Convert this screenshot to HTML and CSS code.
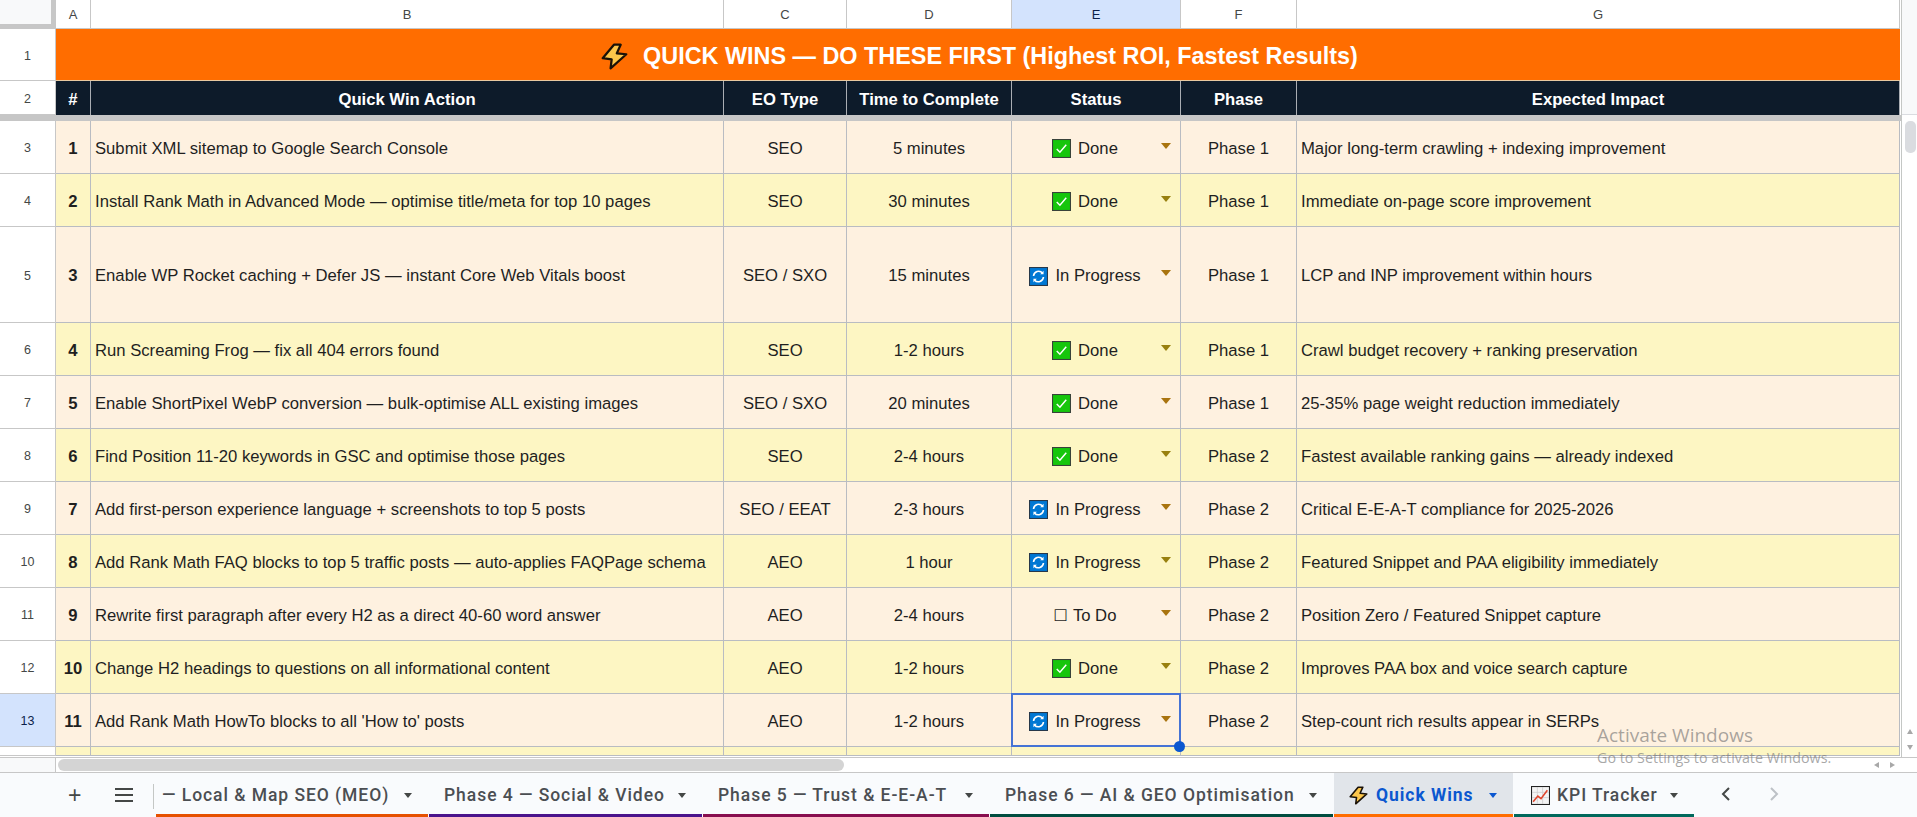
FILE: index.html
```html
<!DOCTYPE html>
<html lang="en">
<head>
  <meta charset="UTF-8">
  <title>Quick Wins</title>
  <link rel="stylesheet" href="styles.css">
</head>
<body>
  <svg class="defs" width="0" height="0">
    <symbol id="bolt" viewBox="0 0 24 24">
      <path d="M11.5 1.5 1.5 13.5l8 1-1 8 14-12.500-8.500-.8L17.500 1.500z" fill="#fcc64a" stroke="#1a1208" stroke-width="2" stroke-linejoin="round"/>
    </symbol>
    <symbol id="check" viewBox="0 0 18 18">
      <rect x=".5" y=".5" width="17" height="17" fill="#16c60c" stroke="#38423a"/>
      <path d="M4.500 9.500 7.500 12.500 13.500 5.500" fill="none" stroke="#fff" stroke-width="1.400"/>
    </symbol>
    <symbol id="sync" viewBox="0 0 18 18">
      <rect x=".5" y=".5" width="17" height="17" fill="#0078d4" stroke="#27384a"/>
      <path d="M4.300 8.500A4.800 4.800 0 0 1 12.800 5.800M13.700 9.500A4.800 4.800 0 0 1 5.200 12.200" fill="none" stroke="#fff" stroke-width="1.500"/>
      <path d="M13.800 3.600v3.200h-3.200zM4.200 14.400v-3.200h3.200z" fill="#fff"/>
    </symbol>
    <symbol id="chart" viewBox="0 0 18 18">
      <rect x=".5" y=".5" width="17" height="17" fill="#f4f4f4" stroke="#222"/>
      <path d="M1 6h16M1 11h16M6 1v16M11 1v16" stroke="#cfcfcf" stroke-width=".8"/>
      <path d="M2 15 6.500 9.500l3 2.500L15.500 4" fill="none" stroke="#e0452c" stroke-width="1.500"/>
    </symbol>
  </svg>

  <div class="app">
    <div class="main">
      <div class="grid">
        <div class="row col-heads">
          <div class="corner"></div>
          <div class="ch">A</div>
          <div class="ch">B</div>
          <div class="ch">C</div>
          <div class="ch">D</div>
          <div class="ch active">E</div>
          <div class="ch">F</div>
          <div class="ch">G</div>
        </div>

        <div class="row title-row">
          <div class="rh">1</div>
          <div class="title">
            <svg class="title-bolt"><use href="#bolt"/></svg>
            <span>QUICK WINS — DO THESE FIRST (Highest ROI, Fastest Results)</span>
          </div>
        </div>

        <div class="row head-row">
          <div class="rh">2</div>
          <div class="th">#</div>
          <div class="th">Quick Win Action</div>
          <div class="th">EO Type</div>
          <div class="th">Time to Complete</div>
          <div class="th">Status</div>
          <div class="th">Phase</div>
          <div class="th">Expected Impact</div>
        </div>

        <div class="freeze"></div>

        <div class="row data peach">
          <div class="rh">3</div>
          <div class="td num">1</div>
          <div class="td">Submit XML sitemap to Google Search Console</div>
          <div class="td mid">SEO</div>
          <div class="td mid">5 minutes</div>
          <div class="td status"><span class="chip"><svg class="ico"><use href="#check"/></svg>Done</span><i class="caret"></i></div>
          <div class="td mid">Phase 1</div>
          <div class="td">Major long-term crawling + indexing improvement</div>
        </div>
        <div class="row data yellow">
          <div class="rh">4</div>
          <div class="td num">2</div>
          <div class="td">Install Rank Math in Advanced Mode — optimise title/meta for top 10 pages</div>
          <div class="td mid">SEO</div>
          <div class="td mid">30 minutes</div>
          <div class="td status"><span class="chip"><svg class="ico"><use href="#check"/></svg>Done</span><i class="caret"></i></div>
          <div class="td mid">Phase 1</div>
          <div class="td">Immediate on-page score improvement</div>
        </div>
        <div class="row data peach tall">
          <div class="rh">5</div>
          <div class="td num">3</div>
          <div class="td">Enable WP Rocket caching + Defer JS — instant Core Web Vitals boost</div>
          <div class="td mid">SEO / SXO</div>
          <div class="td mid">15 minutes</div>
          <div class="td status"><span class="chip"><svg class="ico"><use href="#sync"/></svg>In Progress</span><i class="caret"></i></div>
          <div class="td mid">Phase 1</div>
          <div class="td">LCP and INP improvement within hours</div>
        </div>
        <div class="row data yellow">
          <div class="rh">6</div>
          <div class="td num">4</div>
          <div class="td">Run Screaming Frog — fix all 404 errors found</div>
          <div class="td mid">SEO</div>
          <div class="td mid">1-2 hours</div>
          <div class="td status"><span class="chip"><svg class="ico"><use href="#check"/></svg>Done</span><i class="caret"></i></div>
          <div class="td mid">Phase 1</div>
          <div class="td">Crawl budget recovery + ranking preservation</div>
        </div>
        <div class="row data peach">
          <div class="rh">7</div>
          <div class="td num">5</div>
          <div class="td">Enable ShortPixel WebP conversion — bulk-optimise ALL existing images</div>
          <div class="td mid">SEO / SXO</div>
          <div class="td mid">20 minutes</div>
          <div class="td status"><span class="chip"><svg class="ico"><use href="#check"/></svg>Done</span><i class="caret"></i></div>
          <div class="td mid">Phase 1</div>
          <div class="td">25-35% page weight reduction immediately</div>
        </div>
        <div class="row data yellow">
          <div class="rh">8</div>
          <div class="td num">6</div>
          <div class="td">Find Position 11-20 keywords in GSC and optimise those pages</div>
          <div class="td mid">SEO</div>
          <div class="td mid">2-4 hours</div>
          <div class="td status"><span class="chip"><svg class="ico"><use href="#check"/></svg>Done</span><i class="caret"></i></div>
          <div class="td mid">Phase 2</div>
          <div class="td">Fastest available ranking gains — already indexed</div>
        </div>
        <div class="row data peach">
          <div class="rh">9</div>
          <div class="td num">7</div>
          <div class="td">Add first-person experience language + screenshots to top 5 posts</div>
          <div class="td mid">SEO / EEAT</div>
          <div class="td mid">2-3 hours</div>
          <div class="td status"><span class="chip"><svg class="ico"><use href="#sync"/></svg>In Progress</span><i class="caret"></i></div>
          <div class="td mid">Phase 2</div>
          <div class="td">Critical E-E-A-T compliance for 2025-2026</div>
        </div>
        <div class="row data yellow">
          <div class="rh">10</div>
          <div class="td num">8</div>
          <div class="td">Add Rank Math FAQ blocks to top 5 traffic posts — auto-applies FAQPage schema</div>
          <div class="td mid">AEO</div>
          <div class="td mid">1 hour</div>
          <div class="td status"><span class="chip"><svg class="ico"><use href="#sync"/></svg>In Progress</span><i class="caret"></i></div>
          <div class="td mid">Phase 2</div>
          <div class="td">Featured Snippet and PAA eligibility immediately</div>
        </div>
        <div class="row data peach">
          <div class="rh">11</div>
          <div class="td num">9</div>
          <div class="td">Rewrite first paragraph after every H2 as a direct 40-60 word answer</div>
          <div class="td mid">AEO</div>
          <div class="td mid">2-4 hours</div>
          <div class="td status"><span class="chip"><span class="box">☐</span>To Do</span><i class="caret"></i></div>
          <div class="td mid">Phase 2</div>
          <div class="td">Position Zero / Featured Snippet capture</div>
        </div>
        <div class="row data yellow">
          <div class="rh">12</div>
          <div class="td num">10</div>
          <div class="td">Change H2 headings to questions on all informational content</div>
          <div class="td mid">AEO</div>
          <div class="td mid">1-2 hours</div>
          <div class="td status"><span class="chip"><svg class="ico"><use href="#check"/></svg>Done</span><i class="caret"></i></div>
          <div class="td mid">Phase 2</div>
          <div class="td">Improves PAA box and voice search capture</div>
        </div>
        <div class="row data peach">
          <div class="rh active">13</div>
          <div class="td num">11</div>
          <div class="td">Add Rank Math HowTo blocks to all 'How to' posts</div>
          <div class="td mid">AEO</div>
          <div class="td mid">1-2 hours</div>
          <div class="td status selected"><span class="chip"><svg class="ico"><use href="#sync"/></svg>In Progress</span><i class="caret"></i><b class="handle"></b></div>
          <div class="td mid">Phase 2</div>
          <div class="td">Step-count rich results appear in SERPs</div>
        </div>
        <div class="row data yellow partial">
          <div class="rh"></div>
          <div class="td"></div>
          <div class="td"></div>
          <div class="td"></div>
          <div class="td"></div>
          <div class="td"></div>
          <div class="td"></div>
          <div class="td"></div>
        </div>
      </div>

      <div class="vscroll">
        <div class="vtop"></div>
        <div class="vtrack"><div class="vthumb"></div></div>
        <div class="vbtns">
          <i class="tri-up"></i>
          <i class="tri-down"></i>
        </div>
      </div>
    </div>

    <div class="hbar">
      <div class="hcorner"></div>
      <div class="htrack"><div class="hthumb"></div></div>
      <div class="hbtns">
        <i class="tri-left"></i>
        <i class="tri-right"></i>
      </div>
    </div>

    <div class="tabbar">
      <div class="tools">
        <span class="plus">+</span>
        <span class="burger"><i></i><i></i><i></i></span>
      </div>
      <div class="tab t-local">— Local &amp; Map SEO (MEO)<i class="tab-caret"></i></div>
      <div class="tab t-social">Phase 4 — Social &amp; Video<i class="tab-caret"></i></div>
      <div class="tab t-trust">Phase 5 — Trust &amp; E-E-A-T<i class="tab-caret"></i></div>
      <div class="tab t-geo">Phase 6 — AI &amp; GEO Optimisation<i class="tab-caret"></i></div>
      <div class="tab t-wins"><svg class="tab-ico"><use href="#bolt"/></svg>Quick Wins<i class="tab-caret"></i></div>
      <div class="tab t-kpi"><svg class="tab-ico"><use href="#chart"/></svg>KPI Tracker<i class="tab-caret"></i></div>
      <div class="tab-nav">
        <svg width="12" height="16" viewBox="0 0 12 16"><path d="M9 2 3 8l6 6" fill="none" stroke="#444746" stroke-width="2"/></svg>
        <svg class="off" width="12" height="16" viewBox="0 0 12 16"><path d="M3 2l6 6-6 6" fill="none" stroke="#bdc1c6" stroke-width="2"/></svg>
      </div>
    </div>

    <div class="watermark">
      <div class="wm-big">Activate Windows</div>
      <div class="wm-small">Go to Settings to activate Windows.</div>
    </div>
  </div>
</body>
</html>
```

FILE: styles.css
```css
* {
  box-sizing: border-box;
}

body {
  margin: 0;
  font-family: "Liberation Sans", Arial, sans-serif;
  font-size: 16.67px;
  color: #1f1f1f;
  background: #fff;
}

.defs {
  position: absolute;
}

.app {
  position: relative;
  width: 1917px;
  height: 817px;
  overflow: hidden;
  display: flex;
  flex-direction: column;
}

.main {
  display: flex;
  height: 757px;
  flex: none;
}

.grid {
  width: 1902px;
  overflow: hidden;
  border-right: 1px solid #c4c7c5;
}

/* every row shares the same column widths */
.row {
  display: grid;
  grid-template-columns: 56px 35px 633px 123px 165px 169px 116px 603px;
}

/* column letters */
.col-heads {
  height: 29px;
}

.corner {
  background: #f8f9fa;
  border-right: 5px solid #c7c7c7;
  border-bottom: 5px solid #c7c7c7;
}

.ch {
  display: flex;
  align-items: center;
  justify-content: center;
  font-size: 13px;
  color: #444746;
  border-right: 1px solid #c7c7c7;
  border-bottom: 1px solid #c7c7c7;
  padding-top: 1px;
}

.ch.active {
  background: #d3e3fd;
  color: #0b1f4a;
}

.rh {
  display: flex;
  align-items: center;
  justify-content: center;
  padding-top: 2px;
  font-size: 12.500px;
  color: #444746;
  background: #fff;
  border-right: 1px solid #c7c7c7;
  border-bottom: 1px solid #c7c7c7;
}

.rh.active {
  background: #d3e3fd;
  color: #0b1f4a;
}

/* row 1 */
.title-row {
  height: 52px;
}

.title {
  grid-column: 2 / -1;
  display: flex;
  align-items: center;
  justify-content: center;
  gap: 15px;
  padding: 3px 0 0 3px;
  background: #ff6d00;
  color: #fff;
  font-size: 23.400px;
  font-weight: 700;
  border-bottom: 1px solid #e8c9a0;
}

.title-bolt {
  width: 27px;
  height: 27px;
}

/* row 2 */
.head-row {
  height: 34px;
}

.th {
  display: flex;
  align-items: center;
  justify-content: center;
  padding-top: 3px;
  background: #0d1b2a;
  color: #fff;
  font-weight: 700;
  border-right: 1px solid #a9adb3;
}

.freeze {
  height: 6px;
  background: #c6c6c6;
}

/* data rows */
.data {
  height: 53px;
}

.data.tall {
  height: 96px;
}

.data.partial {
  height: 9px;
}

.td {
  display: flex;
  align-items: center;
  padding: 3px 4px 0;
  white-space: nowrap;
  border-right: 1px solid #b9bcc2;
  border-bottom: 1px solid #b9bcc2;
}

.peach .td {
  background: #fef1e0;
}

.yellow .td {
  background: #fdf6c3;
}

.mid {
  justify-content: center;
}

.num {
  justify-content: center;
  font-weight: 700;
}

.status {
  position: relative;
  padding: 3px 9px 0 0;
}

.chip {
  flex: 1;
  display: flex;
  align-items: center;
  justify-content: center;
  padding-right: 3px;
}

.ico {
  width: 19px;
  height: 19px;
  margin-right: 7px;
}

.box {
  font-family: "DejaVu Sans", sans-serif;
  font-size: 16px;
  margin-right: 5px;
}

.caret {
  width: 0;
  height: 0;
  margin-bottom: 6px;
  border-left: 5px solid transparent;
  border-right: 5px solid transparent;
  border-top: 6px solid #a9740f;
}

.yellow .caret {
  border-top-color: #98800f;
}

.selected::after {
  content: "";
  position: absolute;
  left: -1px;
  top: -1px;
  right: -1px;
  bottom: -1px;
  border: 2.500px solid #4573d5;
}

.handle {
  position: absolute;
  right: -5px;
  bottom: -6px;
  width: 11px;
  height: 11px;
  border-radius: 50%;
  background: #0b57d0;
  z-index: 2;
}

/* right scrollbar */
.vscroll {
  width: 15px;
  display: flex;
  flex-direction: column;
  background: #fff;
}

.vtop {
  height: 115px;
  background: #f8f9fa;
  border-bottom: 1px solid #dadce0;
}

.vtrack {
  flex: 1;
  padding: 6px 1px 0 3px;
}

.vthumb {
  height: 32px;
  border-radius: 5px;
  background: #dadce0;
}

.vbtns {
  height: 35px;
  display: flex;
  flex-direction: column;
  align-items: center;
  gap: 11px;
  padding-top: 7px;
}

.tri-up {
  border-left: 3px solid transparent;
  border-right: 3px solid transparent;
  border-bottom: 5px solid #a8a8a8;
}

.tri-down {
  border-left: 3px solid transparent;
  border-right: 3px solid transparent;
  border-top: 5px solid #a8a8a8;
}

/* bottom scrollbar */
.hbar {
  display: flex;
  height: 15px;
  flex: none;
  border-top: 1px solid #c7c7c7;
  background: #fff;
}

.hcorner {
  width: 56px;
  background: #f8f9fa;
  border-right: 1px solid #c7c7c7;
}

.htrack {
  flex: 1;
  padding: 1px 0 1px 2px;
}

.hthumb {
  width: 786px;
  height: 12px;
  border-radius: 6px;
  background: #d4d4d4;
}

.hbtns {
  width: 49px;
  display: flex;
  align-items: center;
  justify-content: space-around;
  padding-right: 16px;
}

.tri-left {
  border-top: 3px solid transparent;
  border-bottom: 3px solid transparent;
  border-right: 5px solid #a8a8a8;
}

.tri-right {
  border-top: 3px solid transparent;
  border-bottom: 3px solid transparent;
  border-left: 5px solid #a8a8a8;
}

/* sheet tabs */
.tabbar {
  flex: 1;
  display: flex;
  background: #f9fbfd;
  border-top: 1px solid #c7c7c7;
  font-family: Roboto, sans-serif;
  font-size: 17.500px;
  font-weight: 500;
  letter-spacing: .95px;
  color: #4b4e52;
}

.tools {
  width: 156px;
  position: relative;
  display: flex;
  align-items: center;
  padding: 0 0 0 68px;
  gap: 33px;
}

.tools::after {
  content: "";
  position: absolute;
  left: 153px;
  top: 11px;
  height: 25px;
  border-left: 1.500px solid #c4c7c5;
}

.plus {
  font-family: "Liberation Sans", sans-serif;
  font-size: 23px;
  font-weight: 400;
  color: #444746;
  line-height: 1;
}

.burger {
  display: flex;
  flex-direction: column;
  gap: 4px;
}

.burger i {
  display: block;
  width: 18px;
  height: 2px;
  background: #444746;
}

.tab {
  display: flex;
  align-items: center;
  padding: 3px 16px 0 6px;
  border-bottom: 3px solid #000;
  margin-right: 1px;
  white-space: nowrap;
}

.tab-caret {
  width: 0;
  height: 0;
  margin-left: auto;
  border-left: 4.500px solid transparent;
  border-right: 4.500px solid transparent;
  border-top: 5px solid #444746;
}

.t-local {
  width: 272px;
  border-bottom-color: #e65100;
}

.t-social {
  width: 273px;
  padding-left: 15px;
  border-bottom-color: #4a148c;
}

.t-trust {
  width: 286px;
  padding-left: 15px;
  border-bottom-color: #880e4f;
}

.t-geo {
  width: 343px;
  padding-left: 15px;
  border-bottom-color: #004d40;
}

.t-wins {
  width: 179px;
  padding-left: 15px;
  background: #e1e5ea;
  color: #0b57d0;
  font-weight: 700;
  border-bottom-color: #ff6d00;
}

.t-wins .tab-ico {
  margin-right: 8px;
}

.t-wins .tab-caret {
  border-top-color: #0b57d0;
}

.t-kpi {
  width: 180px;
  padding-left: 17px;
  margin-right: 0;
  border-bottom-color: #00695c;
}

.tab-ico {
  width: 19px;
  height: 19px;
  margin-right: 7px;
  flex: none;
}

.tab-nav {
  display: flex;
  align-items: center;
  gap: 36px;
  padding: 0 0 2px 26px;
}

/* windows activation notice */
.watermark {
  position: absolute;
  left: 1597px;
  top: 723px;
  color: rgba(110, 110, 110, .6);
  font-family: "Open Sans", sans-serif;
  pointer-events: none;
}

.wm-big {
  font-size: 19px;
  line-height: 24px;
}

.wm-small {
  font-size: 14.300px;
  line-height: 21px;
}
```
